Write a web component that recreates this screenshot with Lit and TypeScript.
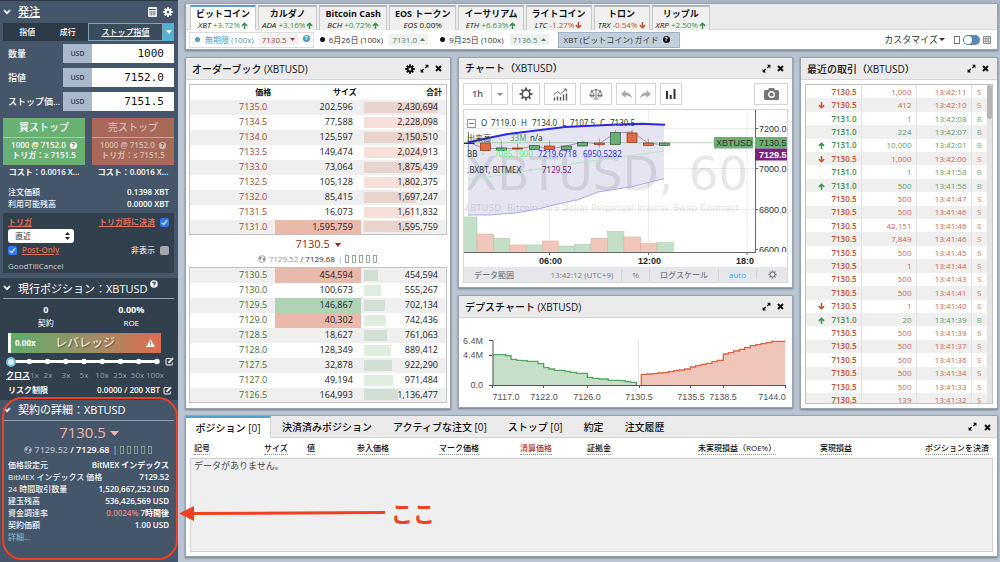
import { LitElement, html, svg, css } from "lit";
import { customElement } from "lit/decorators.js";
import { classMap } from "lit/directives/class-map.js";

const asks: [string, number][] = [
  ["7135.0", 202596], ["7134.5", 77588], ["7134.0", 125597], ["7133.5", 149474], ["7133.0", 73064],
  ["7132.5", 105128], ["7132.0", 85415], ["7131.5", 16073], ["7131.0", 1595759],
];
const askTotals = [2430694, 2228098, 2150510, 2024913, 1875439, 1802375, 1697247, 1611832, 1595759];
const bids: [string, number][] = [
  ["7130.5", 454594], ["7130.0", 100673], ["7129.5", 146867], ["7129.0", 40302], ["7128.5", 18627],
  ["7128.0", 128349], ["7127.5", 32878], ["7127.0", 49194], ["7126.5", 164993],
];
const bidTotals = [454594, 555267, 702134, 742436, 761063, 889412, 922290, 971484, 1136477];
const flashes: Record<string, string> = { "7131.0": "down", "7130.5": "down", "7129.5": "up", "7129.0": "down" };
const MAX_TOTAL = 2430694;

/* price, size, time, tick direction */
const trades: [string, string, string, string][] = [
  ["7130.5", "1,000", "13:42:11", ""], ["7130.5", "412", "13:42:10", "d"], ["7131.0", "1", "13:42:08", ""],
  ["7131.0", "224", "13:42:07", ""], ["7131.0", "10,000", "13:42:01", "u"], ["7130.5", "1,000", "13:42:00", "d"],
  ["7131.0", "1", "13:41:58", ""], ["7131.0", "500", "13:41:56", "u"], ["7130.5", "500", "13:41:47", ""],
  ["7130.5", "500", "13:41:46", ""], ["7130.5", "42,151", "13:41:46", ""], ["7130.5", "7,849", "13:41:46", ""],
  ["7130.5", "500", "13:41:45", ""], ["7130.5", "1", "13:41:44", ""], ["7130.5", "500", "13:41:43", ""],
  ["7130.5", "500", "13:41:41", ""], ["7130.5", "1", "13:41:40", "d"], ["7131.0", "20", "13:41:39", "u"],
  ["7130.5", "500", "13:41:39", ""], ["7130.5", "500", "13:41:37", ""], ["7130.5", "500", "13:41:36", ""],
  ["7130.5", "500", "13:41:34", ""], ["7130.5", "500", "13:41:33", ""], ["7130.5", "139", "13:41:32", ""],
];

const coins = [
  ["ビットコイン", "XBT", "+3.72%"], ["カルダノ", "ADA", "+3.16%"], ["Bitcoin Cash", "BCH", "+0.72%"],
  ["EOS トークン", "EOS", "0.00%"], ["イーサリアム", "ETH", "+6.63%"], ["ライトコイン", "LTC", "-1.27%"],
  ["トロン", "TRX", "-0.54%"], ["リップル", "XRP", "+2.50%"],
];

const fmt = (n: number) => n.toLocaleString("en-US");

const gear = (size: number) => html`<svg width=${size} height=${size} viewBox="0 0 16 16" aria-hidden="true">
  <g fill="currentColor"><path fill-rule="evenodd" d="M8 2.6a5.4 5.4 0 1 0 0 10.8A5.4 5.4 0 0 0 8 2.6zm0 3.2a2.2 2.2 0 1 1 0 4.4 2.2 2.2 0 0 1 0-4.4z"/>
  ${[0, 45, 90, 135, 180, 225, 270, 315].map((a) => svg`<rect x="6.5" y="0.4" width="3" height="3.4" rx=".5" transform="rotate(${a} 8 8)"/>`)}</g></svg>`;
const gearLine = (size: number) => html`<svg width=${size} height=${size} viewBox="0 0 16 16" aria-hidden="true">
  <circle cx="8" cy="8" r="4.4" fill="none" stroke="currentColor" stroke-width="1.9"/>
  ${[0, 45, 90, 135, 180, 225, 270, 315].map((a) => svg`<rect x="6.9" y="0.6" width="2.2" height="2.8" fill="currentColor" transform="rotate(${a} 8 8)"/>`)}</svg>`;
const expand = html`<svg width="9" height="9" viewBox="0 0 9 9" aria-hidden="true"><path fill="currentColor" d="M5 .8h3.4v3.4L7.3 3.1 5.6 4.6l-.8-.8 1.5-1.7zM4 8.4H.6V5l1.1 1.1 1.7-1.5.8.8-1.5 1.7z"/></svg>`;
const cross = html`<svg width="7" height="7" viewBox="0 0 7 7" aria-hidden="true"><path stroke="currentColor" stroke-width="2" d="M1 1l5 5M6 1L1 6"/></svg>`;
const chevron = html`<svg class="chev" width="8" height="6" viewBox="0 0 8 6" aria-hidden="true"><path fill="none" stroke="currentColor" stroke-width="1.8" d="M1 1l3 3.2L7 1"/></svg>`;
const caret = (w: number, h: number) => html`<svg width=${w} height=${h} viewBox="0 0 8 4" preserveAspectRatio="none" aria-hidden="true"><path fill="currentColor" d="M0 0h8L4 4z"/></svg>`;
const caretUp = html`<svg width="5" height="3" viewBox="0 0 8 4" preserveAspectRatio="none" aria-hidden="true"><path fill="currentColor" d="M0 4h8L4 0z"/></svg>`;
const arrow = (dir: string) => html`<svg width="7" height="7" viewBox="0 0 8 8" aria-hidden="true"><path fill="none" stroke="currentColor" stroke-width="1.7" d=${dir === "u" ? "M4 8V1.4M1 4.4l3-3 3 3" : "M4 0v6.6M1 3.6l3 3 3-3"}/></svg>`;
const edit = html`<svg width="9" height="9" viewBox="0 0 9 9" aria-hidden="true"><path fill="none" stroke="currentColor" d="M5.6 1.5H2a1 1 0 0 0-1 1V7a1 1 0 0 0 1 1h4.500a1 1 0 0 0 1-1V5.600"/><path stroke="currentColor" stroke-width="1.700" d="M3.500 5.800L8 1.200"/></svg>`;
const globe = html`<svg width="8" height="8" viewBox="0 0 8 8" aria-hidden="true"><circle cx="4" cy="4" r="3.400" fill="none" stroke="currentColor" stroke-width=".8"/><path fill="currentColor" d="M1 2.500L3 1l1 1.200-1 .8.600 1L2.600 5 1 4zM5 3l2-.8.300 2L6 6.400 5 5z"/></svg>`;
const cells = html`<svg width="33" height="8" viewBox="0 0 33 8" aria-hidden="true">${[0, 7, 14, 21, 28].map((x) => svg`<rect x=${x + 0.5} y=".5" width="3" height="7" fill="none" stroke="#8ba291" stroke-width=".9"/>`)}</svg>`;

@customElement("bx-panel")
class Panel extends LitElement {
  static properties = { heading: { type: String }, settings: { type: Boolean } };
  heading = "";
  settings = false;
  static styles = css`
    :host { display: flex; flex-direction: column; min-width: 0; background: #fff; border: 1px solid #9aa3ac; box-sizing: border-box; box-shadow: 0 1px 2px #6d7985; color: #111; }
    header { display: flex; align-items: center; height: 21px; background: #ebebeb; border-bottom: 1px solid #d5d5d5; padding: 0 7px 0 6px; gap: 5px; }
    h2 { flex: 1; margin: 0; font-size: 10px; line-height: 14px; font-weight: 500; white-space: nowrap; }
    button { display: flex; border: 0; background: none; padding: 0; color: #111; min-width: 9px; justify-content: center; }
  `;
  render() {
    return html`<header><h2>${this.heading}</h2>
      ${this.settings ? html`<button aria-label="設定">${gear(10)}</button>` : ""}
      <button aria-label="拡大">${expand}</button><button aria-label="閉じる">${cross}</button></header><slot></slot>`;
  }
}

@customElement("bx-chart")
class PriceChart extends LitElement {
  static styles = css`
    :host { display: block; padding: 4px; }
    .tools { display: flex; gap: 4px; height: 22px; }
    .tools div { display: flex; }
    .tools button { border: 1px solid #d4d6da; background: #fff; color: #555; display: grid; place-items: center; padding: 0; width: 32px; font: 600 9px/12px "Open Sans", sans-serif; }
    .tools .w28 { width: 28px; } .tools .w29 { width: 29px; } .tools .w22 { width: 22px; } .tools .w16 { width: 16px; color: #888; } .tools .w20 { width: 20px; color: #aaa; }
    .tools .joined { border-left: 0; }
    .tools .cam { margin-left: auto; width: 34px; }
    .plot { display: block; width: 100%; height: 158px; margin-top: 4px; border: 1px solid #d4d6da; border-bottom: 0; box-sizing: border-box; }
    .foot { display: flex; align-items: center; height: 16px; background: #e6e7eb; color: #757b85; font-size: 8px; line-height: 12px; padding: 0 10px; border: 1px solid #d8dade; border-top: 0; box-sizing: border-box; }
    .foot button { border: 0; background: none; padding: 0; font: inherit; color: inherit; font-weight: 500; }
    .foot time { margin-left: auto; padding-right: 8px; font-weight: 500; }
    .foot .opt { border-left: 1px solid #d0d2d6; padding: 0 10px; }
    .foot .auto { color: #37a6d8; }
    .foot .last { border-left: 1px solid #d0d2d6; padding-left: 11px; display: flex; }
    .leg { font: 8px "Noto Sans", "Noto Sans CJK JP", sans-serif; fill: #2d3b33; }
    .grn { fill: #5ba667; } .lime { fill: #67ef85; } .blu { fill: #2b2be0; } .pur { fill: #7a1d82; }
    .ax { font: 9px "Liberation Sans", sans-serif; fill: #333; }
    .bold { font-weight: 700; fill: #222; }
    .white { fill: #fff; font-weight: 700; }
    .wm { font: 47px "DejaVu Sans", sans-serif; fill: #000; fill-opacity: 0.11; }
    .wms { font: 9px "DejaVu Sans", sans-serif; fill: #000; fill-opacity: 0.15; }
  `;
  render() {
    const candles: [number, number, number, string][] = [[91, 207, 230, "r"], [139, 222, 230, "g"], [188, 222, 225, "r"], [238, 214, 226, "g"], [284, 216, 226, "r"], [334, 216, 227, "g"], [383, 205, 216, "g"], [433, 207, 212, "r"], [481, 176, 212, "g"], [531, 177, 206, "r"], [580, 207, 214, "r"], [629, 207, 214, "g"]];
    const wicks = [[91, 205, 232], [139, 200, 232], [188, 209, 228], [238, 212, 229], [284, 200, 229], [334, 214, 229], [383, 202, 218], [433, 194, 221], [481, 168, 212], [531, 168, 206], [580, 194, 214], [629, 203, 216]];
    const vol: [number, number, number, string][] = [[24, 66, 54, "g"], [66, 116, 105, "r"], [116, 164, 118, "g"], [164, 214, 138, "r"], [214, 262, 138, "g"], [262, 310, 126, "r"], [310, 358, 141, "g"], [358, 408, 136, "g"], [408, 458, 118, "r"], [458, 507, 97, "g"], [507, 557, 114, "r"], [557, 606, 133, "r"], [606, 655, 131, "g"]];
    const legend: [number, number, string, string][] = [
      [481, 127, "O", ""], [491, 127, "7119.0", ""], [521, 127, "H", ""], [532, 127, "7134.0", ""], [562, 127, "L", ""], [570, 127, "7107.5", ""], [600, 127, "C", ""], [610, 127, "7130.5", ""],
      [467, 142, "出来高", ""], [510, 142, "33M", "grn"], [530, 142, "n/a", ""],
      [467, 158, "BB", ""], [494, 158, "7085.1000", "lime"], [538, 158, "7219.6718", "blu"], [583, 158, "6950.5282", "blu"],
      [467, 174, ".BXBT, BITMEX", ""], [542, 174, "7129.52", "pur"],
    ];
    return html`
      <div class="tools">
        <div><button class="w29">1h</button><button class="w16 joined" aria-label="時間足">${caret(6, 3)}</button></div>
        <button class="w28" aria-label="設定">${gearLine(14)}</button>
        <button aria-label="インジケーター"><svg width="15" height="13" viewBox="0 0 15 13" fill="none" stroke="currentColor"><path d="M1.500 12.500v-3M4.500 12.500v-4M7.500 12.500V9M10.500 12.500v-6M13.500 12.500v-7" stroke-width="1.400"/><path d="M.500 7l4-3.500 3 2.500L13 1" stroke-width=".9"/><path d="M10.500 1H13.500V4" stroke-width=".7"/></svg></button>
        <button aria-label="比較"><svg width="14" height="12" viewBox="0 0 14 12" fill="none" stroke="currentColor"><path d="M7 1v9.500M4.500 11h5M2 2.500C4 3.500 5 1.500 7 1.500s3 2 5 1M3 3L.800 7.500h4.400zM11 3L8.800 7.500h4.400zM.800 7.500c.500 2 3.900 2 4.400 0M8.800 7.500c.500 2 3.900 2 4.400 0" stroke-width=".8"/></svg></button>
        <div><button class="w20" aria-label="元に戻す"><svg width="11" height="9" viewBox="0 0 11 9"><path fill="currentColor" d="M4.500 0v2.500C8 2.500 10.500 4.500 11 8.500 9.500 6 7.500 5.300 4.500 5.400V8L0 4z"/></svg></button><button class="w20 joined" aria-label="やり直す"><svg width="11" height="9" viewBox="0 0 11 9"><path fill="currentColor" d="M6.500 0v2.500C3 2.500.500 4.500 0 8.500 1.500 6 3.500 5.300 6.500 5.400V8L11 4z"/></svg></button></div>
        <button class="w22" aria-label="チャート"><svg width="10" height="10" viewBox="0 0 10 10"><path fill="#333" d="M0 2h2v8H0zM3.700 6h2v4h-2zM7.500 0h2v10h-2z"/></svg></button>
        <button class="cam" aria-label="スナップショット"><svg width="15" height="12" viewBox="0 0 15 12"><path fill="#777" d="M1.500 2H4l1-2h5l1 2h2.500A1.500 1.500 0 0 1 15 3.500v7a1.500 1.500 0 0 1-1.500 1.500h-12A1.500 1.500 0 0 1 0 10.500v-7A1.500 1.500 0 0 1 1.500 2z"/><circle cx="7.500" cy="6.500" r="2.800" fill="none" stroke="#fff" stroke-width="1.400"/></svg></button>
      </div>
      <svg class="plot" viewBox="464 111 323 157" preserveAspectRatio="xMidYMid meet" role="img" aria-label="XBTUSD 60">
        <path stroke="#ececec" d="M549.5 111v142M648.500 111v142M747 111v142M463 129.500h292M463 169.500h292M463 210.500h292" fill="none"/>
        <path fill="#e5e4f1" d="M468 143.500L488 139 508 135 532 132 565 128 612 125.700 642 124.700 664 125.700V179.700L632 187.700 598 193 578 200.700 555 205.700 538 210 515 214 488 216H468z"/>
        <clipPath id="area"><rect x="463" y="111" width="291" height="142"/></clipPath>
        <clipPath id="times"><rect x="463" y="253" width="291" height="15"/></clipPath>
        <clipPath id="scale"><rect x="755" y="111" width="33" height="142"/></clipPath>
        <g clip-path="url(#area)">
          <text class="wm" x="465" y="191">XBTUSD, 60</text>
          <text class="wms" x="464" y="212">XBTUSD: Bitcoin / US Dollar Perpetual Inverse Swap Contract</text>
        </g>
        <g transform="translate(455 200) scale(0.33333)">
          ${vol.map(([a, b, y, k]) => svg`<rect x=${a} y=${y} width=${b - a} height=${157 - y} fill=${k === "g" ? "#c3dfc7" : "#f0c7ba"} stroke=${k === "g" ? "#9fcba5" : "#e2a795"} stroke-width="1.500"/>`)}
        </g>
        <path fill="none" stroke="#b7e5c0" d="M468 181L520 173 570 165 620 158 664 152"/>
        <path fill="none" stroke="#a9aaf0" d="M468 216H488L515 214 538 210 555 205.700 578 200.700 598 193 632 187.700 664 179.700"/>
        <path stroke="#9bcf9f" stroke-width=".8" d="M463 143.700h292"/>
        <path fill="none" stroke="#a072b0" stroke-width=".8" d="M468 143L485 150 501 149 518 150 534 147 550 150 566 147 583 143 599 145 615 134 632 133 648 144 665 146"/>
        <g transform="translate(455 75) scale(0.33333)">
          ${wicks.map(([x, a, b]) => svg`<path d="M${x} ${a}V${b}" stroke="#8a6a5a" stroke-width="2"/>`)}
          ${candles.map(([x, a, b, k]) => svg`<rect x=${x - 15} y=${a} width="30" height=${b - a} fill=${k === "g" ? "#69b073" : "#dd6b45"} stroke=${k === "g" ? "#225433" : "#8a3012"} stroke-width="2"/>`)}
          <path d="M23 208h36" stroke="#17381f" stroke-width="4"/><path d="M40 172v60" stroke="#225433" stroke-width="2"/>
        </g>
        <path fill="none" stroke="#2929e8" stroke-width="2" d="M468 143.500L488 139 508 135 532 132 565 128 612 125.700 642 124.700 665 125.700"/>
        <rect x="467.500" y="120.500" width="8" height="8" fill="#fff" stroke="#999"/><path d="M469 124.500h5" stroke="#777"/>
        ${legend.map(([x, y, t, c]) => svg`<text class="leg ${c}" x=${x} y=${y}>${t}</text>`)}
        <path fill="#ccc" d="M498 139h4l-2 2zM481 154h4l-2 2zM529 170h4l-2 2z"/>
        <path stroke="#666" fill="none" d="M755.500 111v142M463 253.500h293M755 129.500h3M755 169.500h3M755 210.500h3M755 250.500h3M549.500 253v3M648.500 253v3M747 253v3"/>
        <g clip-path="url(#scale)"><text class="ax" x="759" y="133">7200.0</text><text class="ax" x="759" y="173">7000.0</text><text class="ax" x="759" y="214">6800.0</text><text class="ax" x="759" y="254">6600.0</text></g>
        <rect x="714" y="138" width="39" height="11.500" fill="#69b073"/><rect x="755" y="138" width="33" height="11.500" fill="#69b073"/>
        <text class="ax" x="716" y="147">XBTUSD</text><text class="ax" x="759" y="147">7130.5</text>
        <rect x="755" y="149.500" width="33" height="12" fill="#7b1f83"/><text class="ax white" x="759" y="159">7129.5</text>
        <g clip-path="url(#times)"><text class="ax bold" x="539" y="265">06:00</text><text class="ax bold" x="638" y="265">12:00</text><text class="ax bold" x="736" y="265">18:00</text></g>
      </svg>
      <div class="foot"><button>データ範囲</button><time>13:42:12 (UTC+9)</time><button class="opt">%</button><button class="opt">ログスケール</button><button class="opt auto">auto</button><button class="last" aria-label="設定">${gearLine(9)}</button></div>`;
  }
}

@customElement("bx-depth")
class DepthChart extends LitElement {
  static styles = css`
    :host { display: block; }
    svg { display: block; width: 100%; height: 89px; }
    text { font: 9px "Liberation Sans", sans-serif; fill: #555; }
    .m { text-anchor: middle; } .e { text-anchor: end; }
  `;
  render() {
    const g = "M113 464H152V467H168V478H185V481H200V482H217V484H249V491H266V503H282V507H298V511H330V514H346V517H364V520H397V532H412V535H432V537H460V541H495V542H511V545H527V547H544V556";
    const r = "M559 556V523H575V522H591V521H608V519H624V518H640V515H656V512H673V510H689V507H706V501H722V497H738V493H754V490H771V485H787V481H805V462H820V458H836V453H853V448H869V443H886V437H902V434H918V431H934V428H950V424H991";
    const x: [number, string][] = [[506, "7117.0"], [544, "7122.0"], [587, "7126.0"], [639, "7130.5"], [691, "7135.5"], [723, "7138.5"], [772, "7144.0"]];
    return html`<svg viewBox="459 318 333 89" role="img" aria-label="デプスチャート">
      <path stroke="#e6e6e6" d="M638.500 340v46"/>
      <g transform="translate(455 200) scale(0.33333)" stroke-width="4">
        <path fill="#c5dfc8" d="${g}H113z"/><path fill="none" stroke="#52a763" d=${g}/>
        <path fill="#f0c6ba" d="${r}V556z"/><path fill="none" stroke="#dc6540" d=${r}/>
      </g>
      <path fill="none" stroke="#555" d="M489 340.500h4v45M489 355.500h3M489 385.500h297M543.500 386v2M587.500 386v2M639.500 386v2M690.500 386v2M723.500 386v2M785.500 386v2M492.500 386v2"/>
      <text class="e" x="483" y="344">6.4M</text><text class="e" x="483" y="358">4.4M</text><text class="e" x="483" y="388">0.0</text>
      ${x.map(([p, t]) => svg`<text class="m" x=${p} y="400">${t}</text>`)}
    </svg>`;
  }
}

@customElement("bx-sidebar")
class Sidebar extends LitElement {
  static styles = css`
    :host { display: block; background: #45566a; color: #fff; font-size: 8px; line-height: 12px; }
    * { box-sizing: border-box; }
    section { padding: 0 4px 0 3px; }
    .order { padding-bottom: 5px; border-top: 1px solid #2d3945; }
    .position { background: #323f4c; height: 122px; }
    h2 { margin: 0; font-size: 11px; line-height: 16px; font-weight: 400; flex: 1; white-space: nowrap; }
    .head { display: flex; align-items: center; height: 21px; padding: 0 1px 0 0; gap: 6px; }
    .head h2 { padding-left: 1px; }
    .head sup { font-size: 0; line-height: 0; margin-left: 2px; vertical-align: 5px; }
    .u { text-decoration: underline; font-weight: 500; }
    .rule { border-bottom: 1px solid #93a0ac; }
    .tabs { display: flex; margin-top: 1px; height: 18px; background: #2d3a47; padding-left: 4px; }
    button { font: inherit; color: inherit; border: 0; background: none; padding: 0; }
    .tabs button { flex: 1; font-weight: 500; }
    .tabs .on { flex: 0 0 75px; background: #3b4c5d; border: 1px solid #7fa5bb; text-decoration: underline; }
    .tabs .drop { flex: 0 0 11px; background: #56b0d1; display: grid; place-items: center; }
    .fields { display: grid; gap: 5px; padding: 3px 0 7px; }
    .field { display: grid; grid-template-columns: 60px 29px 1fr; height: 19px; align-items: center; font-size: 9px; font-weight: 500; }
    .field label { padding-left: 5px; }
    .field span { background: #a9b9cb; color: #364352; height: 19px; font-size: 7px; line-height: 19px; text-align: center; font-weight: 600; }
    .field input { width: 100%; height: 19px; border: 0; border-radius: 0; background: #fff; text-align: right; padding: 0 10px 0 0; font: 11px "DejaVu Sans Mono", monospace; color: #111; }
    .two { display: grid; grid-template-columns: 1fr 1fr; gap: 7px; }
    .act { height: 47px; background: #69b073; font-weight: 600; line-height: 10px; display: flex; flex-direction: column; white-space: nowrap; }
    .act.sell { background: #a8695b; color: #d4bab3; }
    .act b { font-size: 10px; line-height: 19px; height: 20px; font-weight: 500; border-bottom: 1px solid #ffffff60; align-self: stretch; }
    .act small { font-size: 8px; padding-top: 2px; align-self: center; }
    .q { display: inline-grid; place-items: center; width: 7px; height: 7px; border-radius: 50%; background: currentColor; margin-left: 2px; vertical-align: middle; }
    .q::before { content: "?"; font: 700 6px/7px "Open Sans", sans-serif; color: #45566a; }
    .cost { text-align: center; line-height: 14px; font-weight: 600; padding-bottom: 7px; }
    dl { margin: 0; padding: 0 5px; }
    dl div { display: flex; justify-content: space-between; white-space: nowrap; }
    dt { color: #eef1f4; font-weight: 500; }
    dd { margin: 0; font-weight: 600; }
    .box { background: #323f4c; margin-top: 3px; padding: 2px 5px 0; height: 60px; }
    .box > div { display: flex; justify-content: space-between; align-items: center; height: 14px; }
    .box label, .link { display: flex; align-items: center; gap: 5px; }
    .link { color: #de6f55; text-decoration: underline; font-weight: 600; }
    .pick { display: grid; width: 66px; height: 14px; }
    .pick > * { grid-area: 1 / 1; }
    .pick svg { justify-self: end; align-self: center; margin-right: 4px; pointer-events: none; }
    select { appearance: none; border: 0; border-radius: 3px; background: #fff; color: #333; font: 8px/14px "Noto Sans CJK JP", sans-serif; padding: 0 7px; height: 14px; }
    input[type="checkbox"] { appearance: none; margin: 0; width: 9px; height: 9px; border-radius: 2px; background: #a3a7ab; display: grid; place-items: center; }
    input[type="checkbox"]:checked { background: #2f78ee; }
    input[type="checkbox"]:checked::before { content: ""; width: 2px; height: 5px; border: solid #fff; border-width: 0 1px 1px 0; transform: rotate(40deg); }
    .tif { color: #ccd2d8; padding-top: 3px; }
    .stats { display: grid; grid-template-columns: 1fr 1fr; text-align: center; padding: 4px 0; }
    .stats b { display: block; font-size: 9px; line-height: 14px; font-weight: 700; }
    .lev { margin: 0 13px 0 5px; height: 20px; display: grid; grid-template-columns: 1fr auto 1fr; align-items: center; background: linear-gradient(90deg, #5fae6b, #a08d65 55%, #dd6c50); border-left: 3px solid #fff; padding: 0 6px 0 4px; font-weight: 700; }
    .lev span { font-size: 12px; line-height: 18px; font-weight: 500; color: #e9e3d5; text-shadow: 1px 1px 1px #0006; }
    .lev svg { justify-self: end; }
    .slide { display: flex; align-items: center; gap: 3px; height: 17px; padding-left: 3px; }
    .slide div { display: grid; width: 156px; }
    .slide div > * { grid-area: 1 / 1; }
    input[type="range"] { appearance: none; width: 100%; margin: 0; height: 11px; background: none; }
    input[type="range"]::-webkit-slider-thumb { appearance: none; width: 10px; height: 10px; border-radius: 50%; background: #d9eefa; border: 2px solid #78b9de; box-sizing: border-box; }
    .ticks { display: grid; grid-template-columns: 24px 9px repeat(5, 18px) 17px 16px; line-height: 10px; padding: 0 0 0 3px; color: #95a0aa; font-size: 8px; text-align: center; white-space: nowrap; }
    .ticks b { color: #fff; font-weight: 700; text-decoration: underline; text-align: left; }
    .risk { display: flex; gap: 3px; align-items: center; padding: 4px 2px 0 5px; font-weight: 600; }
    .risk span { flex: 1; }
    .last { text-align: center; font-size: 15px; line-height: 22px; color: #ecb5a8; font-weight: 500; padding-left: 1px; }
    .last svg { vertical-align: middle; }
    .index { display: flex; justify-content: center; align-items: center; gap: 3px; font-size: 9px; line-height: 12px; font-weight: 600; color: #a9b3bd; padding: 1px 0 3px; }
    .index b { color: #fff; font-weight: 600; }
    .or { color: #e08e79; }
    a { color: #8fc0da; text-decoration: none; padding-left: 5px; }
  `;
  render() {
    const field = (id: string, label: string, value: string) => html`<div class="field"><label for=${id}>${label}</label><span>USD</span><input id=${id} .value=${value} /></div>`;
    const rows = [["価格設定元", "BitMEX インデックス"], ["BitMEX インデックス 価格", "7129.52"], ["24 時間取引数量", "1,520,667,252 USD"], ["建玉残高", "536,426,569 USD"]];
    return html`
      <section class="order">
        <div class="head">${chevron}<h2 class="u">発注</h2>
          <svg width="9" height="10" viewBox="0 0 9 10" aria-hidden="true"><rect width="9" height="10" rx="1" fill="#eee"/><path stroke="#45566a" stroke-width=".5" d="M1 5h7M1 7h7M3.200 4v5M5.800 4v5"/><path stroke="#45566a" d="M1 2.500h7"/></svg>
          ${gear(10)}</div>
        <div class="tabs"><button>指値</button><button>成行</button><button class="on">ストップ指値</button><button class="drop" aria-label="注文タイプ">${caret(6, 4)}</button></div>
        <div class="fields">${field("qty", "数量", "1000")}${field("limit", "指値", "7152.0")}${field("stop", "ストップ価...", "7151.5")}</div>
        <div class="two">
          <button class="act"><b>買ストップ</b><small>1000 @ 7152.0 <i class="q"></i><br />トリガ：≥ 7151.5</small></button>
          <button class="act sell"><b>売ストップ</b><small>1000 @ 7152.0 <i class="q"></i><br />トリガ：≤ 7151.5</small></button>
        </div>
        <div class="two cost"><span>コスト：0.0016 X...</span><span>コスト：0.0016 X...</span></div>
        <dl><div><dt>注文価額</dt><dd>0.1398 XBT</dd></div><div><dt>利用可能残高</dt><dd>0.0000 XBT</dd></div></dl>
        <div class="box">
          <div><label class="link" for="trig">トリガ</label><label class="link">トリガ時に決済<input type="checkbox" checked /></label></div>
          <div><span class="pick"><select id="trig"><option>直近</option></select><svg width="5" height="8" viewBox="0 0 5 8"><path fill="#222" d="M2.500 0L5 3H0zM2.500 8L0 5h5z"/></svg></span></div>
          <div><label class="link"><input type="checkbox" checked />Post-Only</label><label>非表示<input type="checkbox" /></label></div>
          <div class="tif">GoodTillCancel</div>
        </div>
      </section>
      <section class="position">
        <div class="head rule">${chevron}<h2>現行ポジション：XBTUSD<sup><svg width="8" height="8" viewBox="0 0 8 8"><circle cx="4" cy="4" r="3.800" fill="#fff"/><path fill="none" stroke="#323f4c" stroke-width="1.200" d="M2.700 3.200c0-1.600 2.700-1.500 2.600 0C5.300 4 4 4 4 5M4 5.600v1"/></svg></sup></h2></div>
        <div class="stats"><div><b>0</b>契約</div><div><b>0.00%</b>ROE</div></div>
        <div class="lev">0.00x<span>レバレッジ</span><svg width="9" height="8" viewBox="0 0 9 8"><path fill="#fff" d="M4.500 0L9 8H0z"/><path stroke="#d0705a" d="M4.500 2.500v3M4.500 6v1"/></svg></div>
        <div class="slide"><div><svg width="156" height="11" viewBox="0 0 156 11"><path stroke="#fff" stroke-width="3" d="M5 5.500h146"/>${[0, 1, 2, 3, 4, 5, 6, 7, 8].map((i) => svg`<circle cx=${5 + i * 18.25} cy="5.500" r="2.700" fill="#fff"/>`)}</svg><input type="range" min="0" max="8" value="0" aria-label="レバレッジ" /></div>${edit}</div>
        <div class="ticks"><b>クロス</b>${["1x", "2x", "3x", "5x", "10x", "25x", "50x", "100x"].map((t) => html`<span>${t}</span>`)}</div>
        <div class="risk"><span>リスク制限</span>0.0000 / 200 XBT ${edit}</div>
      </section>
      <section>
        <div class="head rule">${chevron}<h2>契約の詳細：XBTUSD</h2></div>
        <div class="last">7130.5 ${caret(9, 5)}</div>
        <div class="index">${globe}<span>7129.52 <b>/ 7129.68</b></span><span>|</span>${cells}</div>
        <dl>${rows.map(([a, b]) => html`<div><dt>${a}</dt><dd>${b}</dd></div>`)}
          <div><dt>資金調達率</dt><dd><span class="or">0.0024%</span> 7時間後</dd></div>
          <div><dt>契約価額</dt><dd>1.00 USD</dd></div></dl>
        <a href="#">詳細...</a>
      </section>`;
  }
}

@customElement("app-root")
class AppRoot extends LitElement {
  static styles = css`
    :host { display: grid; grid-template-columns: 178px minmax(0, 1fr); position: relative; min-height: 100vh; background: linear-gradient(#aab6c4, #bcc7d4 12%, #b9c5d2); font-family: "Open Sans", "Noto Sans CJK JP", sans-serif; font-size: 8px; line-height: 12px; color: #111; overflow: hidden; }
    * { box-sizing: border-box; }
    button { font: inherit; color: inherit; background: none; border: 0; padding: 0; }
    main { display: grid; gap: 7px; align-content: start; padding: 3px 2px 5px 7px; }
    .bar, .book { min-width: 0; }
    .bar { border: 1px solid #9aa3ac; background: #fff; box-shadow: 0 1px 2px #6d7985; height: 47px; }
    .coins { display: flex; gap: 2px; height: 26px; background: #ebebeb; padding: 1px 4px 0; border-bottom: 1px solid #d9d9d9; }
    .coins button { border: 1px solid #c9c9c9; border-top: 2px solid #b5b5b5; border-bottom: 0; padding: 0 3px; min-width: 56px; height: 25px; line-height: 10px; background: #f0f0f0; white-space: nowrap; display: block; text-align: center; }
    .coins button b { display: block; font-size: 9px; line-height: 13px; font-weight: 700; padding: 0 2px; }
    .coins button.on { background: #fff; border-top-color: #4aa5c9; min-width: 66px; }
    .coins svg { vertical-align: -1px; margin-left: 1px; }
    .up { color: #3f8f4f; } .dn { color: #c4502f; }
    .series { display: flex; align-items: center; height: 19px; padding: 0 6px 0 3px; white-space: nowrap; color: #333; }
    .series button { display: flex; align-items: center; height: 16px; gap: 4px; padding: 0 6px; }
    .series .on { border: 1px solid #dcdcdc; color: #4a9cc0; padding: 0 3px 0 5px; gap: 5px; }
    .dot { width: 5px; height: 5px; border-radius: 50%; background: #111; }
    .on .dot { background: #4a9cc0; }
    .px { background: #f0f0f0; padding: 0 3px; line-height: 11px; display: flex; align-items: center; gap: 3px; }
    .px.r { color: #a63f2c; } .px.g { color: #4b8a5a; margin-left: 2px; }
    .help { align-self: flex-start; width: 7px; height: 7px; border-radius: 50%; background: #4a9cc0; color: #fff; font: 700 6px/7px "Open Sans", sans-serif; margin-top: 2px; text-align: center; }
    .help.blk { background: #111; align-self: center; margin-top: 0; }
    .series .guide { background: #c0cfdb; border: 1px solid #9fb3c4; margin-left: 3px; padding: 0 9px 0 5px; }
    .series .custom { margin-left: auto; font-size: 9px; gap: 1px; padding: 0 9px 0 0; }
    .switch { display: flex; align-items: center; gap: 3px; color: #777; }
    .switch input { appearance: none; margin: 0; width: 17px; height: 10px; border-radius: 5px; background: #5c86ad; padding: 1px; display: flex; }
    .switch input::before { content: ""; width: 8px; height: 8px; border-radius: 50%; background: #fff; }
    .work { display: grid; grid-template-columns: minmax(0, 266fr) minmax(0, 335fr) minmax(0, 198fr); gap: 7px; height: 351px; }
    .mid { display: grid; grid-template-rows: 231px 113px; gap: 7px; min-width: 0; }
    .body { padding: 4px 3px; }
    table { border-collapse: collapse; width: 100%; table-layout: fixed; }
    .ob { border: 1px solid #c2c2c2; font-size: 9px; line-height: 14px; }
    .ob th { height: 15px; padding: 0 4px 0 0; text-align: right; font-size: 8px; font-weight: 700; line-height: 12px; }
    .ob td { height: 15px; padding: 0 8px 0 0; text-align: right; color: #222; }
    .ob .p { color: #a04a3c; } .ob.bid .p { color: #3d7048; }
    .odd { background: #efefef; }
    .ob .down { background: #e9b9ab; } .ob .up2 { background: #b0d3b5; }
    .stack { display: grid; align-items: center; padding-left: 3px; height: 14px; }
    .stack > * { grid-area: 1 / 1; }
    .fill { height: 11px; background: #f7e0da; } .odd .fill { background: #e9d3cd; }
    .bid .fill { background: #e0eee2; } .bid .odd .fill { background: #d2dfd4; }
    .quote { height: 32px; text-align: center; color: #8c2c17; font-size: 11px; line-height: 17px; font-weight: 500; }
    .quote svg { vertical-align: middle; margin-left: 2px; }
    .idx { display: flex; justify-content: center; align-items: center; gap: 3px; color: #999; font-size: 8px; line-height: 13px; }
    .idx b { color: #333; font-weight: 500; } .idx svg { margin: 0; }
    .scroll { margin: 4px; height: 320px; overflow: hidden; border: 1px solid #c2c2c2; display: grid; grid-template-columns: minmax(0, 1fr) 5px; }
    .tr { height: 322px; line-height: 12px; }
    .tr td { padding: 0 4px 0 0; text-align: right; border-right: 1px solid #e3e3e3; opacity: 0.85; }
    .tr td:first-child { font-weight: 600; opacity: 1; }
    .tr td:last-child { padding: 0; text-align: center; border: 0; opacity: 0.7; }
    .tr svg { vertical-align: -1px; margin-right: 6px; }
    .tr col:last-child { width: 16px; }
    .track { background: #e4e4e4; } .thumb { width: 5px; height: 34px; border-radius: 3px; background: #b5b5b5; }
    .pos { border: 1px solid #9aa3ac; background: #fff; box-shadow: 0 1px 2px #6d7985; height: 142px; display: flex; flex-direction: column; }
    .ptabs { display: flex; align-items: center; background: #ebebeb; border-bottom: 1px solid #d5d5d5; height: 22px; padding-right: 6px; font-size: 10px; font-weight: 500; gap: 21px; }
    .ptabs .on { background: #fff; border-top: 2px solid #4aa5c9; height: 22px; width: 85px; border-right: 1px solid #d5d5d5; margin-right: -10px; }
    .ptabs .win { display: flex; gap: 7px; margin-left: auto; align-items: center; }
    .ph { margin: 0 4px; width: auto; font-weight: 500; }
    .ph th { padding: 0; height: 20px; text-align: left; font-weight: 500; white-space: nowrap; }
    .ph th:last-child { text-align: right; padding-right: 4px; }
    .ph th:first-child { padding-left: 4px; }
    .ph span { border-bottom: 1px dotted #999; display: inline-block; line-height: 12px; }
    .ph .red { color: #a63f2c; }
    .empty { flex: 1; margin: 0 4px 4px; border: 1px solid #cfcfcf; background: #efefef; color: #444; font-size: 9px; padding: 1px 3px; }
    .ring { position: absolute; left: 2px; top: 397px; width: 176px; height: 163px; border: 2px solid #ee4023; border-radius: 20px; pointer-events: none; }
    .note { position: absolute; left: 179px; top: 501px; display: flex; align-items: center; gap: 5px; color: #ee4023; font-size: 22px; line-height: 24px; font-weight: 700; pointer-events: none; }
  `;
  private rows(list: [string, number][], totals: number[]) {
    return list.map(([p, s], i) => html`<tr class=${classMap({ odd: i % 2 === 0 })}>
      <td class="p">${p}</td><td class=${flashes[p] === "up" ? "up2" : flashes[p] ?? ""}>${fmt(s)}</td>
      <td><div class="stack"><div class="fill" style="width:${(totals[i] / MAX_TOTAL) * 100}%"></div><span>${fmt(totals[i])}</span></div></td></tr>`);
  }
  render() {
    const series = (name: string, p: string) => html`<button><i class="dot"></i>${name}<span class="px g">${p} ${caretUp}</span></button>`;
    const heads: [string, number][] = [["記号", 74], ["サイズ", 43], ["値", 50], ["参入価格", 82], ["マーク価格", 81], ["清算価格", 67], ["証拠金", 111], ["未実現損益（ROE%）", 122], ["実現損益", 72], ["ポジションを決済", 101]];
    return html`
      <bx-sidebar></bx-sidebar>
      <main>
        <div class="bar">
          <nav class="coins">${coins.map(([n, s, c], i) => html`<button class=${i ? "" : "on"}><b>${n}</b><i>${s}</i> <span class=${c[0] === "+" ? "up" : c[0] === "-" ? "dn" : ""}>${c}${c[0] === "0" ? "" : arrow(c[0] === "+" ? "u" : "d")}</span></button>`)}</nav>
          <div class="series">
            <button class="on"><i class="dot"></i>無期限 (100x)<span class="px r">7130.5 ${caret(5, 3)}</span><span class="help">?</span></button>
            ${series("6月26日 (100x)", "7131.0")}${series("9月25日 (100x)", "7136.5")}
            <button class="guide">XBT (ビットコイン) ガイド<span class="help blk">?</span></button>
            <button class="custom">カスタマイズ${caret(6, 3)}</button>
            <label class="switch"><svg width="6" height="8" viewBox="0 0 6 8"><rect x=".5" y=".5" width="5" height="7" fill="none" stroke="currentColor"/></svg><input type="checkbox" aria-label="レイアウト" /><svg width="8" height="8" viewBox="0 0 8 8"><path fill="none" stroke="currentColor" stroke-width=".8" d="M.5.5h7v7h-7zM.5 2.800h7M.5 5.200h7M2.800.5v7M5.200.5v7"/></svg></label>
          </div>
        </div>
        <div class="work">
          <bx-panel heading="オーダーブック (XBTUSD)" settings><div class="body">
            <table class="ob"><thead><tr><th>価格</th><th>サイズ</th><th>合計</th></tr></thead><tbody>${this.rows(asks, askTotals)}</tbody></table>
            <div class="quote">7130.5 ${caret(6, 4)}<div class="idx">${globe}<span>7129.52 <b>/ 7129.68</b></span><span>|</span>${cells}</div></div>
            <table class="ob bid"><tbody>${this.rows(bids, bidTotals)}</tbody></table>
          </div></bx-panel>
          <div class="mid">
            <bx-panel heading="チャート（XBTUSD）"><bx-chart></bx-chart></bx-panel>
            <bx-panel heading="デプスチャート (XBTUSD)"><bx-depth></bx-depth></bx-panel>
          </div>
          <bx-panel heading="最近の取引（XBTUSD）"><div class="scroll">
            <table class="tr"><colgroup><col /><col /><col /><col /></colgroup><tbody>${trades.map(([p, s, t, d], i) => html`<tr class=${classMap({ odd: i % 2 === 1, up: p === "7131.0", dn: p !== "7131.0" })}><td>${d ? arrow(d) : ""}${p}</td><td>${s}</td><td>${t}</td><td>${p === "7131.0" ? "B" : "S"}</td></tr>`)}</tbody></table>
            <div class="track"><div class="thumb"></div></div>
          </div></bx-panel>
        </div>
        <div class="pos">
          <div class="ptabs"><button class="on">ポジション [0]</button><button>決済済みポジション</button><button>アクティブな注文 [0]</button><button>ストップ [0]</button><button>約定</button><button>注文履歴</button>
            <div class="win"><button aria-label="拡大">${expand}</button><button aria-label="閉じる">${cross}</button></div></div>
          <table class="ph"><colgroup>${heads.map(([, w]) => html`<col style="width:${w / 8.03}%" />`)}</colgroup><thead><tr>${heads.map(([h]) => html`<th class=${h === "清算価格" ? "red" : ""}><span>${h}</span></th>`)}</tr></thead></table>
          <div class="empty">データがありません。</div>
        </div>
      </main>
      <div class="ring"></div>
      <div class="note"><svg width="207" height="16" viewBox="0 0 207 16" aria-hidden="true"><path stroke="#ee4023" stroke-width="3" d="M12 8.500L206 7.500"/><path fill="#ee4023" d="M0 8.500L15 1v15z"/></svg>ここ</div>`;
  }
}
